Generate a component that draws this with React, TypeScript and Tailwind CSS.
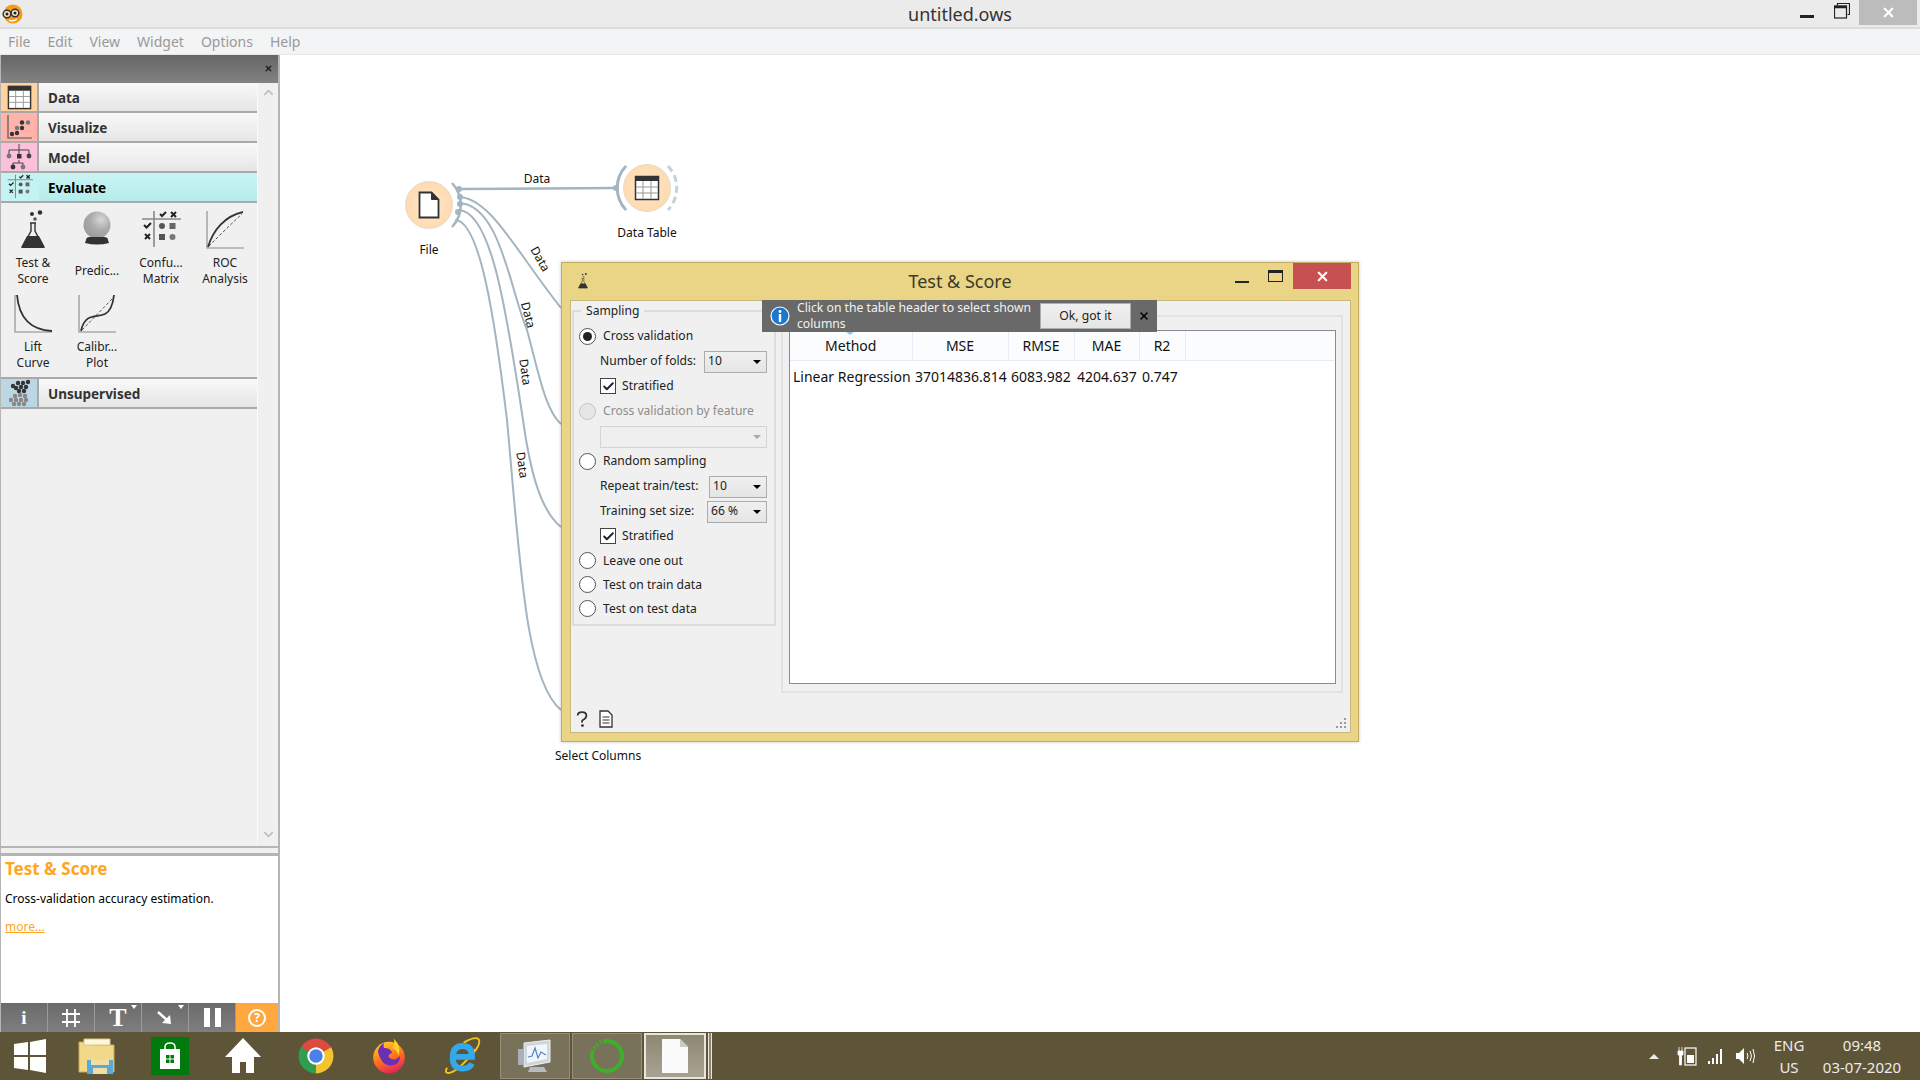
import React from "react";
import { Check, ChevronUp, ChevronDown, X } from "lucide-react";

// ---- small glyphs ----
function TableGlyph({ size = 28 }: { size?: number }) {
  return (
    <svg width={size} height={size} viewBox="0 0 28 28">
      <rect x="2.5" y="2.5" width="23" height="23" fill="#fff" stroke="#333" strokeWidth="1.5" />
      <rect x="2" y="2" width="24" height="5" fill="#333" />
      <path d="M10 7v18M18 7v18M3 13h22M3 19h22" stroke="#999" strokeWidth="1" />
    </svg>
  );
}

function VisualizeGlyph() {
  return (
    <svg width="28" height="28" viewBox="0 0 28 28">
      <path d="M3 2v23h24" fill="none" stroke="#555" strokeWidth="1.2" />
      <circle cx="7" cy="21" r="2.2" fill="#333" />
      <circle cx="12" cy="20" r="2.2" fill="#333" />
      <circle cx="12" cy="15" r="2.2" fill="#777" />
      <circle cx="17" cy="15" r="2.2" fill="#333" />
      <circle cx="17" cy="9.5" r="2.2" fill="#333" />
      <circle cx="23" cy="9.5" r="2.2" fill="#777" />
    </svg>
  );
}

function ModelGlyph() {
  return (
    <svg width="28" height="28" viewBox="0 0 28 28">
      <path d="M14 1v6M4 11V7h20v4M14 7v4M14 17v3M8 23v-3h10v3" fill="none" stroke="#444" strokeWidth="1" />
      <circle cx="4" cy="13" r="2.4" fill="#777" />
      <rect x="12" y="11" width="4.5" height="4.5" fill="#333" />
      <circle cx="24" cy="13" r="2.4" fill="#444" />
      <circle cx="8" cy="24" r="2.4" fill="#333" />
      <circle cx="18" cy="24" r="2.4" fill="#777" />
    </svg>
  );
}

function ConfusionGlyph({ size = 28 }: { size?: number }) {
  return (
    <svg width={size} height={size} viewBox="0 0 40 40">
      <path d="M13 1v36M1 9h39" stroke="#888" strokeWidth="1.6" />
      <path d="M19 4l2 2 4-4M3 15l2.500 2.500 4.500-4.500" fill="none" stroke="#222" strokeWidth="2" />
      <path d="M30 2l5 5M35 2l-5 5M4 24l5 5M9 24l-5 5" stroke="#222" strokeWidth="2" />
      <circle cx="21" cy="16" r="3" fill="#555" />
      <rect x="28.500" y="13" width="6" height="6" fill="#666" />
      <rect x="18" y="24" width="6" height="6" fill="#555" />
      <circle cx="31.500" cy="27" r="3" fill="#777" />
    </svg>
  );
}

function UnsupervisedGlyph() {
  return (
    <svg width="28" height="28" viewBox="0 0 28 28">
      {[
        [8, 7], [13, 4], [18, 4], [23, 3], [11, 9], [16, 8], [21, 8], [14, 12], [19, 12],
      ].map(([x, y]) => (
        <circle key={`${x}-${y}`} cx={x} cy={y} r="2.200" fill="#333" />
      ))}
      {[
        [10, 17], [15, 16], [20, 17], [6, 21], [11, 21], [16, 21], [21, 21], [9, 25], [14, 25], [19, 25],
      ].map(([x, y]) => (
        <circle key={`${x}-${y}`} cx={x} cy={y} r="2.200" fill="#888" />
      ))}
    </svg>
  );
}

function FlaskGlyph({ size = 40 }: { size?: number }) {
  return (
    <svg width={size} height={size} viewBox="0 0 40 40">
      <circle cx="19" cy="4" r="2" fill="#333" />
      <circle cx="27" cy="2.500" r="2.300" fill="#333" />
      <circle cx="22" cy="9" r="1.800" fill="#555" />
      <path d="M17 13h6M18 13v8L9.500 37h21L22 21v-8" fill="none" stroke="#333" strokeWidth="1.400" />
      <path d="M14 26h12l5.500 10.500q.5 1.500-1 1.500H9.500q-1.500 0-1-1.500z" fill="#333" />
    </svg>
  );
}

function BallGlyph() {
  return (
    <svg width="40" height="40" viewBox="0 0 40 40">
      <defs>
        <radialGradient id="ball" cx="0.65" cy="0.3" r="0.8">
          <stop offset="0" stopColor="#d8d8d8" />
          <stop offset="0.5" stopColor="#aaa" />
          <stop offset="1" stopColor="#999" />
        </radialGradient>
      </defs>
      <circle cx="20" cy="15" r="13.500" fill="url(#ball)" />
      <path d="M9 30q0-3 4-3h14q4 0 4 3l1 3q-12 3-24 0z" fill="#333" />
    </svg>
  );
}

function CurveGlyph({ d, dash }: { d: string; dash?: string }) {
  return (
    <svg width="40" height="40" viewBox="0 0 40 40">
      <path d="M2 1v37h37" fill="none" stroke="#aaa" strokeWidth="1.600" />
      {dash && <path d={dash} fill="none" stroke="#555" strokeWidth="1" strokeDasharray="3 2" />}
      <path d={d} fill="none" stroke="#333" strokeWidth="1.800" />
    </svg>
  );
}

function Logo() {
  return (
    <svg width="22" height="22" viewBox="0 0 22 22">
      <circle cx="12" cy="11" r="9.500" fill="#f59a1f" />
      <circle cx="6" cy="11" r="3.800" fill="#f6e6c8" stroke="#333" strokeWidth="1.500" />
      <circle cx="14" cy="10" r="3.800" fill="#f6e6c8" stroke="#333" strokeWidth="1.500" />
      <circle cx="6" cy="11" r="1.500" fill="#222" />
      <circle cx="14" cy="10" r="1.500" fill="#222" />
      <path d="M8 17q4 2 8-1" fill="none" stroke="#fff" strokeWidth="1.200" />
    </svg>
  );
}

// ---- dock ----
const categories = [
  { name: "Data", tile: "bg-[#ffd39f]", row: "bg-gradient-to-b from-[#f9f9f9] to-[#e6e6e6]", icon: <TableGlyph size={27} /> },
  { name: "Visualize", tile: "bg-[#ffb3ab]", row: "bg-gradient-to-b from-[#f9f9f9] to-[#e6e6e6]", icon: <VisualizeGlyph /> },
  { name: "Model", tile: "bg-[#fcc0dc]", row: "bg-gradient-to-b from-[#f9f9f9] to-[#e6e6e6]", icon: <ModelGlyph /> },
  { name: "Evaluate", tile: "bg-[#c3f3f3]", row: "bg-gradient-to-b from-[#c8f5f4] to-[#b5eceb]", icon: <ConfusionGlyph size={26} /> },
];

function CategoryRow({ name, tile, row, icon, active }: { name: string; tile: string; row: string; icon: React.ReactNode; active?: boolean }) {
  return (
    <div className={`flex h-[30px] border-b-2 border-[#a9a9a9] ${row}`}>
      <div className={`flex w-[38px] items-center justify-center ${tile} ${active ? "" : "border-r-2 border-[#a9a9a9]"}`}>{icon}</div>
      <span className={`pl-[9px] text-[13.500px] font-bold leading-[30px] ${active ? "text-black" : "text-[#333]"}`}>{name}</span>
    </div>
  );
}

const widgets: { label: string[]; icon: React.ReactNode }[] = [
  { label: ["Test &", "Score"], icon: <FlaskGlyph /> },
  { label: ["Predic..."], icon: <BallGlyph /> },
  { label: ["Confu...", "Matrix"], icon: <ConfusionGlyph size={40} /> },
  { label: ["ROC", "Analysis"], icon: <CurveGlyph d="M3 37C8 20 20 6 38 2" dash="M4 36C14 26 26 14 37 4" /> },
  { label: ["Lift", "Curve"], icon: <CurveGlyph d="M4 1C6 24 18 36 39 37" /> },
  { label: ["Calibr...", "Plot"], icon: <CurveGlyph d="M4 37C8 18 20 24 28 20C34 17 36 10 37 1" dash="M5 36L36 4" /> },
];

function Dock() {
  return (
    <aside className="flex w-[280px] flex-col border-x border-r-2 border-l-[#b5b5b5] border-r-[#b5b5b5] bg-[#f0f0f0]">
      <div className="relative h-[28px] bg-gradient-to-b from-[#666] to-[#828282]">
        <X size={9} strokeWidth={4} className="absolute right-[5px] top-[9px] text-[#222]" />
      </div>
      <div className="flex h-[763px]">
        <div className="w-[256px]">
          {categories.map((c) => (
            <CategoryRow key={c.name} {...c} active={c.name === "Evaluate"} />
          ))}
          <div className="grid h-[174px] grid-cols-4 content-start pt-[2px]">
            {widgets.map((w) => (
              <div key={w.label[0]} className="flex h-[84px] flex-col items-center pt-[5px]">
                <div className="h-[40px]">{w.icon}</div>
                <div className="mt-[5px] flex h-[32px] flex-col justify-center text-center text-[12px] leading-[16px] text-[#222]">
                  {w.label.map((l) => (
                    <span key={l}>{l}</span>
                  ))}
                </div>
              </div>
            ))}
          </div>
          <div className="border-t-2 border-[#a9a9a9]">
            <CategoryRow name="Unsupervised" tile="bg-[#bcd6e4]" row="bg-gradient-to-b from-[#f9f9f9] to-[#e6e6e6]" icon={<UnsupervisedGlyph />} />
          </div>
        </div>
        <div className="flex flex-1 flex-col items-center justify-between border-l border-[#fafafa] pb-[4px] pt-[2px] text-[#bdbdbd]">
          <ChevronUp size={15} strokeWidth={2.5} />
          <ChevronDown size={15} strokeWidth={2.5} />
        </div>
      </div>
      <div className="h-[9px] border-y-2 border-[#b5b5b5]" />
      <div className="h-[148px] border-t border-[#b5b5b5] bg-white px-[4px]">
        <div className="mt-[2px] text-[17px] font-bold leading-[22px] text-[#ffa51f]">Test &amp; Score</div>
        <div className="mt-[11px] text-[12px] leading-[16px] text-black">Cross-validation accuracy estimation.</div>
        <a className="mt-[12px] block text-[12px] leading-[16px] text-[#ffa51f] underline">more...</a>
      </div>
      <Toolbar />
    </aside>
  );
}

function Toolbar() {
  const cell = "relative flex w-[47px] items-center justify-center border-r border-[#9b9b9b] text-white";
  const corner = "absolute right-[4px] top-[2px] h-0 w-0 border-x-[3px] border-t-[4px] border-x-transparent border-t-white";
  return (
    <div className="flex h-[29px] bg-gradient-to-b from-[#6b6b6b] to-[#7e7e7e]">
      <div className={cell}>
        <span className="font-['Liberation_Serif',serif] text-[19px] font-bold leading-none">i</span>
      </div>
      <div className={cell}>
        <svg width="20" height="20" viewBox="0 0 20 20">
          <path d="M6 1v18M14 1v18M1 6h18M1 14h18" stroke="#fff" strokeWidth="1.800" />
        </svg>
      </div>
      <div className={cell}>
        <span className="font-['Liberation_Serif',serif] text-[26px] font-bold leading-none">T</span>
        <i className={corner} />
      </div>
      <div className={cell}>
        <svg width="18" height="18" viewBox="0 0 18 18">
          <path d="M2 3l9 8" stroke="#fff" strokeWidth="2.500" />
          <path d="M15 15l-1-9-8 8z" fill="#fff" />
        </svg>
        <i className={corner} />
      </div>
      <div className={cell}>
        <div className="flex gap-[5px]">
          <i className="h-[19px] w-[6px] bg-white" />
          <i className="h-[19px] w-[6px] bg-white" />
        </div>
      </div>
      <div className="flex flex-1 items-center justify-center bg-[#ffa840]">
        <span className="flex h-[18px] w-[18px] items-center justify-center rounded-full border-2 border-white text-[12px] font-bold leading-none text-white">?</span>
      </div>
    </div>
  );
}

// ---- Test & Score window ----
function Radio({ label, checked, disabled }: { label: string; checked?: boolean; disabled?: boolean }) {
  return (
    <label className={`flex items-center gap-[7px] ${disabled ? "text-[#8c8c8c]" : "text-[#222]"}`}>
      <span className={`flex h-[17px] w-[17px] items-center justify-center rounded-full border ${disabled ? "border-[#c4c4c4] bg-[#e6e6e6]" : "border-[#555] bg-white"}`}>
        {checked && <span className="h-[9px] w-[9px] rounded-full bg-[#222]" />}
      </span>
      {label}
    </label>
  );
}

function Stratified() {
  return (
    <label className="flex items-center gap-[6px] pl-[21px] text-[#222]">
      <span className="flex h-[16px] w-[16px] items-center justify-center border border-[#444] bg-white">
        <Check size={13} strokeWidth={3.5} className="text-[#222]" />
      </span>
      Stratified
    </label>
  );
}

function Combo({ value, width, disabled }: { value?: string; width: string; disabled?: boolean }) {
  return (
    <div className={`flex h-[22px] items-center justify-between border pl-[3px] pr-[5px] ${width} ${disabled ? "border-[#d4d4d4] bg-[#efefef]" : "border-[#acacac] bg-gradient-to-b from-[#f0f0f0] to-[#e5e5e5]"}`}>
      <span>{value}</span>
      <i className={`h-0 w-0 border-x-[4px] border-t-[4px] border-x-transparent ${disabled ? "border-t-[#aaa]" : "border-t-black"}`} />
    </div>
  );
}

function ComboRow({ label, value, width }: { label: string; value: string; width: string }) {
  return (
    <div className="flex items-center justify-between pl-[21px] pr-[5px] text-[#222]">
      <span>{label}</span>
      <Combo value={value} width={width} />
    </div>
  );
}

function SamplingBox() {
  const row = "flex h-[25px] flex-col justify-center";
  const short = "flex h-[24px] flex-col justify-center";
  return (
    <fieldset className="ml-[1px] h-[324px] w-[204px] border-2 border-[#dcdcdc] pl-[5px] pr-[2px]">
      <legend className="ml-[2px] px-[5px] text-[12.100px] leading-[18px] text-[#222]">Sampling</legend>
      <div className="pt-[4px] text-[12.100px]">
        <div className={row}><Radio label="Cross validation" checked /></div>
        <div className={row}><ComboRow label="Number of folds:" value="10" width="w-[63px]" /></div>
        <div className={row}><Stratified /></div>
        <div className={row}><Radio label="Cross validation by feature" disabled /></div>
        <div className={row}>
          <div className="pl-[21px] pr-[5px]"><Combo width="w-full" disabled /></div>
        </div>
        <div className={row}><Radio label="Random sampling" /></div>
        <div className={row}><ComboRow label="Repeat train/test:" value="10" width="w-[58px]" /></div>
        <div className={row}><ComboRow label="Training set size:" value="66 %" width="w-[60px]" /></div>
        <div className={row}><Stratified /></div>
        <div className={short}><Radio label="Leave one out" /></div>
        <div className={short}><Radio label="Test on train data" /></div>
        <div className={short}><Radio label="Test on test data" /></div>
      </div>
    </fieldset>
  );
}

function ResultsTable() {
  const head = "h-[29px] border-r border-b border-[#e4edf6] bg-[#fbfcfd] text-center font-normal";
  const cell = "h-[32px] pl-[3px] text-left font-normal whitespace-nowrap";
  return (
    <div className="relative h-[354px] border border-[#8a8a96] bg-white">
      <i className="absolute left-[55px] top-0 h-0 w-0 border-x-[5px] border-t-[4px] border-x-transparent border-t-[#8fc3e8]" />
      <table className="table-fixed text-[14px] text-[#111]">
        <colgroup>
          <col className="w-[122px]" />
          <col className="w-[96px]" />
          <col className="w-[66px]" />
          <col className="w-[65px]" />
          <col className="w-[46px]" />
          <col className="w-[149px]" />
        </colgroup>
        <thead>
          <tr>
            <th className={head}>Method</th>
            <th className={head}>MSE</th>
            <th className={head}>RMSE</th>
            <th className={head}>MAE</th>
            <th className={head}>R2</th>
            <th className="border-b border-[#e4edf6] bg-[#fbfcfd]" />
          </tr>
        </thead>
        <tbody>
          <tr>
            <td className={cell}>Linear Regression</td>
            <td className={cell}>37014836.814</td>
            <td className={cell}>6083.982</td>
            <td className={cell}>4204.637</td>
            <td className={cell}>0.747</td>
            <td />
          </tr>
        </tbody>
      </table>
    </div>
  );
}

function TestScoreWindow() {
  return (
    <div className="absolute left-[281px] top-[207px] h-[480px] w-[798px] border border-[#c4ad63] bg-[#ead485] shadow-[0_0_3px_rgba(0,0,0,0.25)]">
      {/* title bar */}
      <div className="relative flex h-[37px] items-center justify-center text-[18px] text-[#3a3a2a]">
        <div className="absolute left-[13px] top-[10px]"><FlaskGlyph size={16} /></div>
        Test &amp; Score
        <i className="absolute left-[673px] top-[18px] h-[2px] w-[14px] bg-[#222]" />
        <i className="absolute left-[706px] top-[7px] h-[12px] w-[15px] border border-t-[3px] border-[#222]" />
        <div className="absolute left-[731px] top-0 flex h-[26px] w-[58px] items-center justify-center bg-[#c75050]">
          <X size={15} strokeWidth={3.5} className="text-white" />
        </div>
      </div>

      {/* body */}
      <div className="relative ml-[8px] h-[433px] w-[781px] border border-[#c9b97a] bg-[#f0f0f0]">
        <div className="flex h-[400px]">
          <div className="pt-[1px]"><SamplingBox /></div>
          <div className="ml-[5px] mt-[14px] h-[378px] w-[562px] border-2 border-[#e3e3e3] pb-[8px] pl-[6px] pr-[5px] pt-[13px]">
            <ResultsTable />
          </div>
        </div>
        <div className="relative flex h-[31px] items-center gap-[10px] pl-[4px] pt-[4px]">
          <svg width="14" height="18" viewBox="0 0 16 20">
            <path d="M3 6q0-4 5-4t5 4q0 3-3 4.500T8.500 14" fill="none" stroke="#333" strokeWidth="2" />
            <circle cx="8.500" cy="17.500" r="1.600" fill="#333" />
          </svg>
          <svg width="14" height="18" viewBox="0 0 14 18">
            <path d="M1 1h8l4 4v12H1z" fill="#fff" stroke="#333" strokeWidth="1.300" />
            <path d="M3.500 7h7M3.500 10h7M3.500 13h7" stroke="#333" strokeWidth="1.200" />
          </svg>
          <svg className="absolute bottom-[3px] right-[3px]" width="11" height="11" viewBox="0 0 11 11" fill="#9a9a9a">
            <rect x="8" y="0" width="2" height="2" />
            <rect x="4" y="4" width="2" height="2" />
            <rect x="8" y="4" width="2" height="2" />
            <rect x="0" y="8" width="2" height="2" />
            <rect x="4" y="8" width="2" height="2" />
            <rect x="8" y="8" width="2" height="2" />
          </svg>
        </div>
      </div>

      {/* notification over the content */}
      <div className="absolute left-[200px] top-[37px] flex h-[32px] w-[395px] items-center bg-[#696969] text-[12.200px] leading-[16px] text-[#f2f2f2]">
        <svg className="ml-[8px]" width="20" height="20" viewBox="0 0 20 20">
          <circle cx="10" cy="10" r="9" fill="#1a78d0" stroke="#fff" strokeWidth="1.200" />
          <circle cx="10" cy="5.500" r="1.400" fill="#fff" />
          <rect x="8.800" y="8" width="2.400" height="8" fill="#fff" />
        </svg>
        <div className="ml-[7px] w-[236px]">Click on the table header to select shown columns</div>
        <div className="ml-[7px] flex h-[26px] w-[91px] items-center justify-center border border-[#adadad] bg-gradient-to-b from-[#f0f0f0] to-[#e5e5e5] text-[#222]">Ok, got it</div>
        <X size={12} strokeWidth={3} className="ml-[7px] text-black" />
      </div>
    </div>
  );
}

// ---- canvas ----
function Node({ left, top, label, icon }: { left: string; top: string; label: string; icon: React.ReactNode }) {
  return (
    <div className={`absolute flex w-[100px] flex-col items-center ${left} ${top}`}>
      <div className="flex h-[48px] w-[48px] items-center justify-center rounded-full border border-[#e6dccd] bg-[radial-gradient(circle,#ffe9d0_0%,#ffdcb2_65%,#fccf9b_100%)]">{icon}</div>
      <span className="mt-[12px] text-[12px] leading-[18px] text-[#111]">{label}</span>
    </div>
  );
}

function Wires() {
  const labels = [
    { x: 537, y: 183, r: 0 },
    { x: 540, y: 263, r: 60 },
    { x: 528, y: 319, r: 75 },
    { x: 525, y: 376, r: 82 },
    { x: 522, y: 469, r: 82 },
  ];
  return (
    <svg className="absolute left-0 top-0" width="1640" height="977" viewBox="280 55 1640 977">
      <g fill="none" stroke="#a3b5c0" strokeWidth="2">
        <path d="M459 189L615 188" strokeWidth="2.500" />
        <path d="M458 197C490 197 515 250 561 308" />
        <path d="M458 203C500 203 510 290 527 330C538 370 545 410 561 424" />
        <path d="M458 210C490 210 505 300 523 420C530 470 540 510 561 527" />
        <path d="M455 220C480 220 495 320 507 420C520 560 525 680 561 710" />
      </g>
      <path d="M452 183A32 32 0 0 1 452 227" fill="none" stroke="#a3b5c0" strokeWidth="2.500" />
      <path d="M626 166A32 32 0 0 0 626 210" fill="none" stroke="#a3b5c0" strokeWidth="3" />
      <path d="M668 166A32 32 0 0 1 668 210" fill="none" stroke="#c6d2da" strokeWidth="3" strokeDasharray="7 4" />
      {[[459, 189], [460, 197], [460, 204], [458, 212], [616, 188]].map(([x, y]) => (
        <circle key={y} cx={x} cy={y} r="3" fill="#a3b5c0" />
      ))}
      <g fontSize="12" fill="#111" textAnchor="middle" fontFamily="'Noto Sans', sans-serif">
        {labels.map((l) => (
          <text key={l.y} x={l.x} y={l.y} transform={`rotate(${l.r} ${l.x} ${l.y - 4})`}>
            Data
          </text>
        ))}
      </g>
    </svg>
  );
}

function Canvas() {
  return (
    <main className="relative flex-1 bg-white">
      <Wires />
      <Node
        left="left-[99px]"
        top="top-[126px]"
        label="File"
        icon={
          <svg width="22" height="28" viewBox="0 0 22 28">
            <path d="M1.500 1.500h12l7 7v18h-19z" fill="#fff" stroke="#333" strokeWidth="1.800" />
            <path d="M13.500 1.500v7h7" fill="#333" stroke="#333" strokeWidth="1" />
          </svg>
        }
      />
      <Node left="left-[317px]" top="top-[109px]" label="Data Table" icon={<TableGlyph size={28} />} />
      <TestScoreWindow />
      <span className="absolute left-[275px] top-[692px] text-[12px] leading-[18px] text-[#111]">Select Columns</span>
    </main>
  );
}

// ---- taskbar ----
function TaskIcon({ children, state, width = "w-[73px]" }: { children: React.ReactNode; state?: "open" | "active"; width?: string }) {
  const look =
    state === "active"
      ? "w-[62px] border-2 border-[#e8e6dc] bg-gradient-to-b from-[#8d8873] to-[#a7a392]"
      : state === "open"
        ? "w-[70px] border border-[#96907a] bg-[#79725a]"
        : width;
  return <div className={`flex h-[46px] shrink-0 items-center justify-center ${look}`}>{children}</div>;
}

function Taskbar() {
  return (
    <footer className="flex h-[48px] items-center bg-[#5e5538] text-[15px] leading-[22px] text-[#ececec]">
      <div className="flex items-center">
        <TaskIcon width="w-[60px]">
          <svg width="34" height="34" viewBox="0 0 34 34" fill="#fff">
            <path d="M1 5l14-2v13H1zM17 3l16-3v16H17zM1 18h14v13L1 29zM17 18h16v16l-16-3z" />
          </svg>
        </TaskIcon>
        <TaskIcon>
          <svg width="40" height="40" viewBox="0 0 40 40">
            <path d="M2 6h12l3 3h20v27H2z" fill="#f2d98a" stroke="#c9a956" />
            <path d="M7 3h26v6H7z" fill="#fff7dc" stroke="#d9c689" />
            <path d="M10 24h26v14H10z" fill="#5aa9d8" />
            <path d="M14 24h18v5H14zM16 38v-6h14v6" fill="#f2dea0" />
          </svg>
        </TaskIcon>
        <TaskIcon>
          <div className="flex h-[38px] w-[38px] items-center justify-center bg-[#007a0c]">
            <svg width="26" height="28" viewBox="0 0 26 28">
              <path d="M8 8V5q0-4 5-4t5 4v3" fill="none" stroke="#fff" strokeWidth="1.500" />
              <path d="M3 7h20v20H3z" fill="#fff" />
              <path d="M9 13h3.500v3.500H9zM13.500 13H17v3.500h-3.500zM9 17.500h3.500V21H9zM13.500 17.500H17V21h-3.500z" fill="#007a0c" />
            </svg>
          </div>
        </TaskIcon>
        <TaskIcon>
          <svg width="40" height="40" viewBox="0 0 40 40" fill="#fff">
            <path d="M20 2L2 21h7v16h8V26h6v11h8V21h7z" />
          </svg>
        </TaskIcon>
        <TaskIcon>
          <svg width="38" height="38" viewBox="0 0 48 48">
            <path d="M24 24L4.950 13A22 22 0 0 1 43.050 13z" fill="#dd4b3e" />
            <path d="M24 24L43.050 13A22 22 0 0 1 24 46z" fill="#f4c430" />
            <path d="M24 24L24 46A22 22 0 0 1 4.950 13z" fill="#2f9e4f" />
            <circle cx="24" cy="24" r="11" fill="#fff" />
            <circle cx="24" cy="24" r="8.500" fill="#4a80e8" />
          </svg>
        </TaskIcon>
        <TaskIcon>
          <svg width="38" height="40" viewBox="0 0 48 48">
            <defs>
              <linearGradient id="fx" x1="0.2" y1="0" x2="0.6" y2="1">
                <stop offset="0" stopColor="#ffcf2e" />
                <stop offset="0.5" stopColor="#ff7a1a" />
                <stop offset="1" stopColor="#e3225a" />
              </linearGradient>
            </defs>
            <circle cx="24" cy="26" r="20" fill="url(#fx)" />
            <path d="M10 18q4 18 16 18t12-12q-8 8-14 2q-2-4 4-6q-2-6-10-6q-2-2 0-6q-6 2-8 10z" fill="#6b2fb5" />
            <path d="M30 2q10 10 6 22q-2-8-8-10q4-4 2-12z" fill="#ffcf2e" />
          </svg>
        </TaskIcon>
        <TaskIcon>
          <svg width="40" height="40" viewBox="0 0 48 48">
            <path d="M6 38Q2 46 10 44Q22 40 40 16" fill="none" stroke="#f5c51d" strokeWidth="2.200" />
            <path d="M26 8Q40 0 44 4Q47 9 38 20" fill="none" stroke="#f5c51d" strokeWidth="2.200" />
            <path d="M36 25H13q0-13 12-13 11 0 11 13zM13 27q0 12 12 12 8 0 11-6" fill="none" stroke="#35a8e8" strokeWidth="7" />
          </svg>
        </TaskIcon>
        <div className="ml-[2px] mr-[2px]">
          <TaskIcon state="open">
            <svg width="38" height="38" viewBox="0 0 38 38">
              <path d="M8 6l26-3v22L8 30z" fill="#cfd6df" stroke="#eee" />
              <path d="M11 9l20-2v15l-20 4z" fill="#f2f6fa" />
              <path d="M12 20l4-1 3-8 3 10 3-6 5 3" fill="none" stroke="#4a86c8" strokeWidth="1.200" />
              <path d="M2 12h5v16H2z" fill="#aab0b8" />
              <path d="M14 30h14l3 5H12z" fill="#b8bcc2" />
            </svg>
          </TaskIcon>
        </div>
        <div className="mr-[2px]">
          <TaskIcon state="open">
            <svg width="36" height="36" viewBox="0 0 36 36">
              <circle cx="18" cy="18" r="15" fill="none" stroke="#3fae2a" strokeWidth="4" />
              <path d="M4 12A15 15 0 0 1 14 3" fill="none" stroke="#79725a" strokeWidth="5" strokeDasharray="2 2" />
            </svg>
          </TaskIcon>
        </div>
        <TaskIcon state="active">
          <svg width="26" height="34" viewBox="0 0 26 34">
            <path d="M0 0h18l8 8v26H0z" fill="#fbfbfb" />
            <path d="M18 0v8h8z" fill="#c9c9c9" />
          </svg>
        </TaskIcon>
        <i className="ml-[2px] h-[46px] w-[4px] border-x border-[#e8e6dc] bg-[#8d8873]" />
      </div>

      <div className="ml-auto flex items-center">
        <i className="h-0 w-0 border-x-[5px] border-b-[5px] border-x-transparent border-b-[#ececec]" />
        <svg className="ml-[18px]" width="20" height="20" viewBox="0 0 20 20">
          <path d="M2 1v4M5 1v4M1 5h5v4H4.500v10H2.500V9H1z" fill="#fff" stroke="#fff" strokeWidth="0.800" />
          <rect x="8" y="2" width="11" height="17" fill="#5e5538" stroke="#fff" strokeWidth="1.200" />
          <rect x="10" y="9" width="7" height="8" fill="#fff" />
        </svg>
        <svg className="ml-[10px]" width="16" height="16" viewBox="0 0 16 16" fill="#fff">
          <path d="M1 13h2v3H1zM5 10h2v6H5zM9 6h2v10H9zM13 1h2v15h-2z" />
        </svg>
        <svg className="ml-[12px]" width="20" height="18" viewBox="0 0 20 18">
          <path d="M1 6h3l5-5v16l-5-5H1z" fill="#fff" />
          <path d="M12 6q2 3 0 6M15 4q3 5 0 10M18 2q3 7 0 14" fill="none" stroke="#fff" strokeWidth="1" />
        </svg>
        <div className="ml-[18px] w-[32px] text-center">
          <div>ENG</div>
          <div>US</div>
        </div>
        <div className="ml-[15px] mr-[16px] w-[84px] text-center">
          <div>09:48</div>
          <div>03-07-2020</div>
        </div>
      </div>
    </footer>
  );
}

export default function App() {
  return (
    <div className="flex h-[1080px] w-[1920px] flex-col overflow-hidden bg-white font-['Noto_Sans',sans-serif]">
      <header className="relative flex h-[29px] items-center justify-center border-b-2 border-[#dcdcdc] bg-[#ebebeb] pt-[2px] text-[18px] text-[#333]">
        <div className="absolute left-[1px] top-[3px]"><Logo /></div>
        untitled.ows
        <div className="absolute right-[3px] top-0 flex">
          <i className="mr-[20px] mt-[15px] h-[3px] w-[14px] bg-[#222]" />
          <svg className="mr-[9px] mt-[3px]" width="16" height="16" viewBox="0 0 16 16" fill="none" stroke="#222">
            <path d="M3.500 2.500V.500h12v11h-2" strokeWidth="1.200" />
            <rect x="0.500" y="3" width="12" height="12" strokeWidth="1.200" />
            <path d="M0 4h13" strokeWidth="2.500" />
          </svg>
          <div className="flex h-[25px] w-[58px] items-center justify-center bg-[#bcbcbc]">
            <X size={15} strokeWidth={3.5} className="text-white" />
          </div>
        </div>
      </header>
      <nav className="flex h-[26px] items-center gap-[17px] border-b border-[#e6e6e6] bg-[#f3f4f6] pl-[8px] text-[14px] text-[#999]">
        <span>File</span>
        <span>Edit</span>
        <span>View</span>
        <span>Widget</span>
        <span>Options</span>
        <span>Help</span>
      </nav>
      <div className="flex h-[977px]">
        <Dock />
        <Canvas />
      </div>
      <Taskbar />
    </div>
  );
}
